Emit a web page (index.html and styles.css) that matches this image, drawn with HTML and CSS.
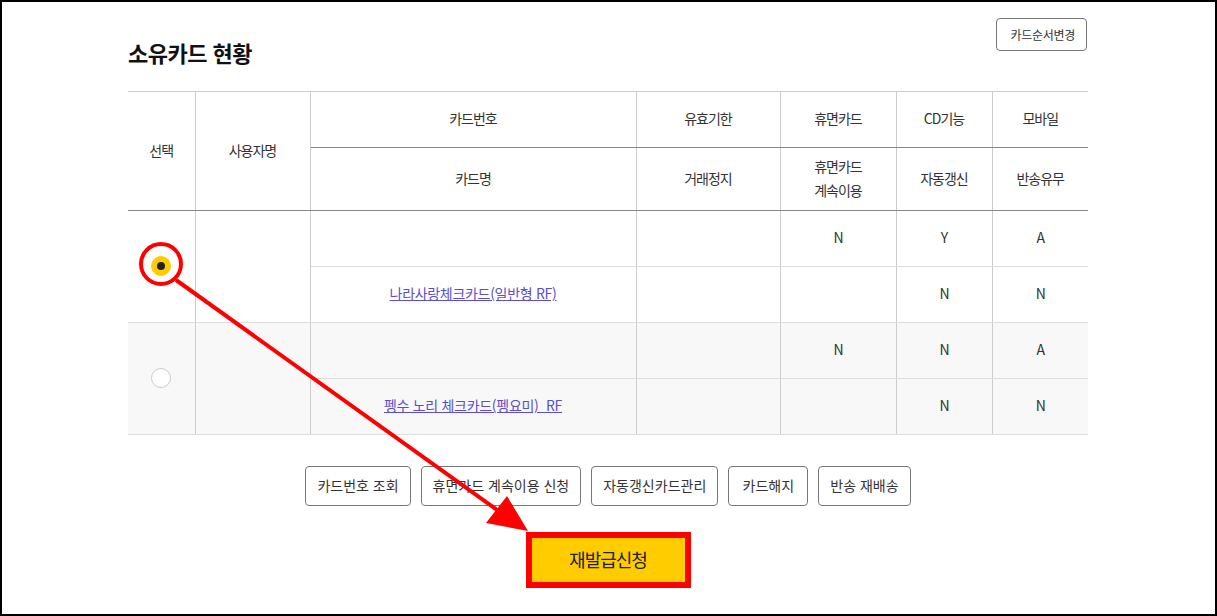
FILE: index.html
```html
<!DOCTYPE html>
<html lang="ko">
<head>
    <meta charset="UTF-8">
    <title>소유카드 현황</title>
    <link rel="stylesheet" href="styles.css">
</head>
<body>
    <div class="frame">
        <div class="page">
            <div class="head">
                <h2 class="title">소유카드 현황</h2>
                <button class="btn-small">카드순서변경</button>
            </div>

            <table class="cards">
                <colgroup>
                    <col style="width:67px">
                    <col style="width:115px">
                    <col style="width:326px">
                    <col style="width:144px">
                    <col style="width:116px">
                    <col style="width:96px">
                    <col style="width:96px">
                </colgroup>
                <thead>
                    <tr class="h1">
                        <th rowspan="2">선택</th>
                        <th rowspan="2">사용자명</th>
                        <th>카드번호</th>
                        <th>유효기한</th>
                        <th>휴면카드</th>
                        <th>CD기능</th>
                        <th>모바일</th>
                    </tr>
                    <tr class="h2">
                        <th>카드명</th>
                        <th>거래정지</th>
                        <th>휴면카드<br>계속이용</th>
                        <th>자동갱신</th>
                        <th>반송유무</th>
                    </tr>
                </thead>
                <tbody>
                    <tr>
                        <td rowspan="2"><span class="radio checked"></span></td>
                        <td rowspan="2"></td>
                        <td></td>
                        <td></td>
                        <td>N</td>
                        <td>Y</td>
                        <td>A</td>
                    </tr>
                    <tr>
                        <td><a href="#">나라사랑체크카드(일반형 RF)</a></td>
                        <td></td>
                        <td></td>
                        <td>N</td>
                        <td>N</td>
                    </tr>
                    <tr class="alt">
                        <td rowspan="2"><span class="radio"></span></td>
                        <td rowspan="2"></td>
                        <td></td>
                        <td></td>
                        <td>N</td>
                        <td>N</td>
                        <td>A</td>
                    </tr>
                    <tr class="alt">
                        <td><a href="#">펭수 노리 체크카드(펭요미)_RF</a></td>
                        <td></td>
                        <td></td>
                        <td>N</td>
                        <td>N</td>
                    </tr>
                </tbody>
            </table>

            <div class="actions">
                <button class="btn">카드번호 조회</button>
                <button class="btn">휴면카드 계속이용 신청</button>
                <button class="btn">자동갱신카드관리</button>
                <button class="btn">카드해지</button>
                <button class="btn">반송 재배송</button>
            </div>

            <div class="main-action">
                <button class="btn-reissue">재발급신청</button>
            </div>
        </div>

        <!-- annotation drawn over the page -->
        <svg class="marks" width="1217" height="616" viewBox="0 0 1217 616">
            <circle cx="161" cy="264" r="20" fill="none" stroke="#ff0000" stroke-width="4"/>
            <line x1="176" y1="280" x2="500" y2="512" stroke="#ff0000" stroke-width="4"/>
            <polygon points="528,531 486,523 507,496" fill="#ff0000"/>
        </svg>
    </div>
</body>
</html>
```

FILE: styles.css
```css
* {
    margin: 0;
    padding: 0;
    box-sizing: border-box;
}
html, body {
    width: 100%;
    height: 100%;
    background: #fff;
}
body {
    font-family: "Noto Sans CJK KR", "Noto Sans", sans-serif;
    color: #333;
    overflow: hidden;
}
.frame {
    position: relative;
    width: 1217px;
    height: 616px;
    border: 2px solid #000;
}
.page {
    width: 960px;
    margin: 0 0 0 126px;
    padding-top: 16px;
}
.head {
    display: flex;
    justify-content: space-between;
    align-items: flex-start;
    height: 73px;
}
.title {
    margin-top: 19px;
    font-size: 22px;
    line-height: 30px;
    font-weight: 700;
    color: #111;
    letter-spacing: -0.5px;
}
.btn-small {
    height: 33px;
    padding: 0 11px 0 14px;
    margin-right: 1px;
    font-family: inherit;
    font-size: 12px;
    letter-spacing: -0.3px;
    color: #333;
    background: #fff;
    border: 1px solid #777;
    border-radius: 4px;
}

/* table */
.cards {
    width: 960px;
    border-collapse: collapse;
    table-layout: fixed;
    font-size: 14px;
    letter-spacing: -1px;
}
.cards th, .cards td {
    text-align: center;
    font-weight: 400;
    padding-bottom: 3px;
    border-left: 1px solid #ccc;
    border-right: 1px solid #ccc;
}
.cards tr > :first-child {
    border-left: none;
}
.cards tr > :last-child {
    border-right: none;
}
.cards thead tr.h1 th {
    height: 56px;
    border-top: 1px solid #ccc;
    border-bottom: 1px solid #888;
}
.cards thead tr.h2 th {
    height: 63px;
    line-height: 24px;
    border-bottom: 1px solid #888;
}
.cards tbody td {
    height: 56px;
    border-bottom: 1px solid #ddd;
}
.cards tbody tr.alt td {
    background: #f8f8f8;
}
.cards a {
    color: #5b4fd1;
    text-decoration: underline;
    letter-spacing: -0.3px;
}

.radio {
    display: inline-block;
    width: 20px;
    height: 20px;
    border-radius: 50%;
    border: 1px solid #ccc;
    background: #fff;
    vertical-align: middle;
    margin-top: -1px;
    position: relative;
}
.radio.checked {
    border-color: #ffcc00;
    background: #ffcc00;
}
.radio.checked::after {
    content: "";
    position: absolute;
    left: 5px;
    top: 5px;
    width: 8px;
    height: 8px;
    border-radius: 50%;
    background: #222;
}

/* buttons */
.actions {
    display: flex;
    justify-content: center;
    gap: 10px;
    margin-top: 31px;
}
.btn {
    min-width: 80px;
    height: 40px;
    padding: 0 11px 2px;
    font-family: inherit;
    font-size: 14px;
    letter-spacing: 0;
    color: #333;
    background: #fff;
    border: 1px solid #777;
    border-radius: 4px;
}
.main-action {
    display: flex;
    justify-content: center;
    margin-top: 26px;
}
.btn-reissue {
    width: 165px;
    height: 56px;
    padding-bottom: 2px;
    font-family: inherit;
    font-size: 18px;
    letter-spacing: -1px;
    color: #222;
    background: #ffcc00;
    border: 6px solid #ff0000;
}

.marks {
    position: absolute;
    left: -2px;
    top: -2px;
    pointer-events: none;
}
```
